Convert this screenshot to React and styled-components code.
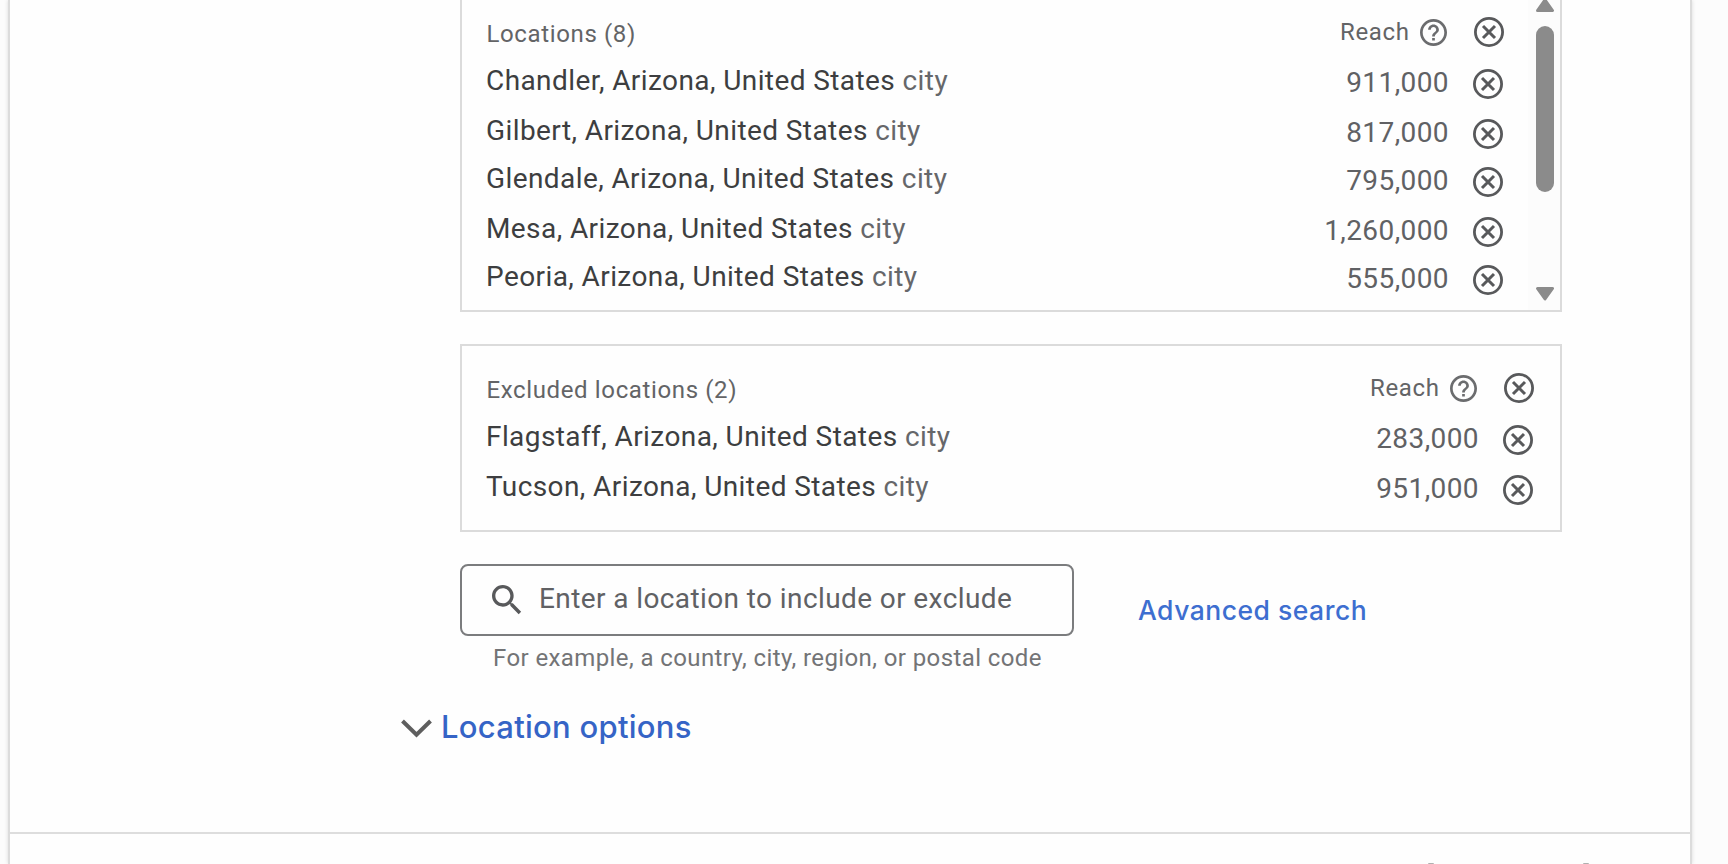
import React from 'react';
import styled, { createGlobalStyle, css } from 'styled-components';

const GlobalStyle = createGlobalStyle`
    * {
        box-sizing: border-box;
    }
    body {
        margin: 0;
        background: #fcfcfc;
        font-family: Roboto, sans-serif;
        overflow: hidden;
    }
    svg {
        display: block;
        flex: none;
    }
`;

const Page = styled.main`
    height: 864px;
    padding: 0 36px 0 8px;
    overflow: hidden;
`;

const Card = styled.div`
    height: 864px;
    display: flex;
    flex-direction: column;
    background: #fefefe;
    border: solid #dcdcdc;
    border-width: 0 2px;
    box-shadow: 0 0 4px rgba(0, 0, 0, 0.14);
`;

const Settings = styled.section`
    height: 834px;
    padding-left: 391px;
    border-bottom: 2px solid #dddddd;
`;

const Targeting = styled.div`
    width: 1161px;
    padding-left: 59px;
`;

const boxBorder = css`
    border: 2px solid #dbdbdb;
`;

const LocationBox = styled.div`
    display: flex;
    width: 1102px;
    ${boxBorder}
    ${(props) =>
        props.$scrolled
            ? css`
                  height: 312px;
                  border-top: 0;
              `
            : css`
                  height: 188px;
                  margin-top: 32px;
                  padding-top: 10px;
              `}
`;

const BoxContent = styled.div`
    flex: 1;
`;

const BoxHeader = styled.header`
    display: flex;
    align-items: center;
    height: 60px;
    padding: 4px 26px 0 24.5px;
    color: #636466;
    font-size: 24px;
    letter-spacing: 0.63px;
    h2 {
        flex: 1;
        margin: 0;
        padding-top: 4px;
        font-size: 24px;
        font-weight: 400;
    }
    .help {
        margin: 0 27px 0 10.5px;
    }
`;

const LocationRow = styled.li`
    display: flex;
    height: 48px;
    padding: 0 27px 0 24px;
    font-size: 28px;
    letter-spacing: 0.41px;
    color: #606164;
    &:nth-child(even) {
        margin-top: 2px;
    }
    svg {
        margin-top: 9px;
    }
`;

const LocationList = styled.ul`
    margin: 0;
    padding: 0;
    list-style: none;
`;

const LocationName = styled.span`
    flex: 1;
    line-height: 42px;
    color: #3d3e40;
    em {
        font-style: normal;
        color: #66676a;
    }
`;

const ReachValue = styled.span`
    margin-right: 24px;
    line-height: 46px;
`;

const ScrollBar = styled.div`
    display: flex;
    flex-direction: column;
    align-items: center;
    width: 32px;
    margin-left: -2px;
    padding: 0 0 9px 2px;
    background: #fcfcfc;
`;

const ScrollThumb = styled.div`
    width: 18px;
    height: 166px;
    margin: 14px 0 auto;
    border-radius: 9px;
    background: #8b8b8b;
`;

const SearchRow = styled.div`
    display: flex;
    align-items: flex-start;
    margin-top: 32px;
`;

const SearchField = styled.div`
    display: flex;
    align-items: center;
    gap: 12px;
    width: 614px;
    height: 72px;
    padding-left: 25px;
    border: 2px solid #7b7c7e;
    border-radius: 8px;
    color: #606164;
    font-size: 28px;
    letter-spacing: 0.4px;
    span {
        padding-bottom: 4px;
    }
`;

const SearchHint = styled.p`
    margin: 10px 0 0 33px;
    color: #737476;
    font-size: 24px;
    line-height: 24px;
    letter-spacing: 0.4px;
`;

const AdvancedSearch = styled.a`
    margin: 26px 0 0 64px;
    color: #3d6ed0;
    font: 500 26.5px/40px Inter, sans-serif;
    letter-spacing: 0.5px;
`;

const LocationOptions = styled.div`
    display: flex;
    align-items: center;
    gap: 9px;
    height: 40px;
    margin-top: 37px;
    color: #3564c6;
    font: 500 31px/40px Inter, sans-serif;
    letter-spacing: 0.27px;
    svg {
        margin-top: 3px;
    }
`;

// Only the tips of the next panel's marks are visible at the fold
const NextPanel = styled.section`
    display: flex;
    flex: 1;
    align-items: flex-end;
    justify-content: flex-end;
    gap: 149px;
    padding-right: 101px;
    i {
        width: 6px;
        height: 1px;
        border-radius: 3px 3px 0 0;
        background: #b0b0b0;
    }
`;

const RemoveIcon = () => (
    <svg width="30" height="30" viewBox="0 0 30 30" fill="none" stroke="#58595b">
        <circle cx="15" cy="15" r="13.6" strokeWidth="2.8" />
        <path d="M9 9L21 21M21 9L9 21" strokeWidth="3" />
    </svg>
);

const HelpIcon = () => (
    <svg className="help" width="27" height="27" viewBox="2 2 20 20" fill="#6b6c6e">
        <path d="M11 18h2v-2h-2v2zm1-16C6.48 2 2 6.48 2 12s4.48 10 10 10 10-4.48 10-10S17.52 2 12 2zm0 18c-4.41 0-8-3.59-8-8s3.59-8 8-8 8 3.59 8 8-3.59 8-8 8zm0-14c-2.21 0-4 1.79-4 4h2c0-1.1.9-2 2-2s2 .9 2 2c0 2-3 1.75-3 5h2c0-2.25 3-2.5 3-5 0-2.21-1.79-4-4-4z" />
    </svg>
);

const SearchIcon = () => (
    <svg width="40" height="40" viewBox="0 0 24 24" fill="#58595b">
        <path d="M15.5 14h-.79l-.28-.27C15.41 12.59 16 11.11 16 9.5 16 5.91 13.09 3 9.5 3S3 5.91 3 9.5 5.91 16 9.5 16c1.61 0 3.09-.59 4.23-1.57l.27.28v.79l5 4.99L20.49 19l-4.99-5zm-6 0C7.01 14 5 11.99 5 9.5S7.01 5 9.5 5 14 7.01 14 9.5 11.99 14 9.5 14z" />
    </svg>
);

const ChevronIcon = () => (
    <svg width="31" height="19" viewBox="0 0 31 19" fill="none" stroke="#5e5e5e" strokeWidth="4">
        <path d="M1.5 2L15.5 15.6L29.5 2" />
    </svg>
);

const included = [
    { name: 'Chandler', reach: 911000 },
    { name: 'Gilbert', reach: 817000 },
    { name: 'Glendale', reach: 795000 },
    { name: 'Mesa', reach: 1260000 },
    { name: 'Peoria', reach: 555000 },
];

const excluded = [
    { name: 'Flagstaff', reach: 283000 },
    { name: 'Tucson', reach: 951000 },
];

const Locations = ({ title, locations }) => (
    <BoxContent>
        <BoxHeader>
            <h2>{title}</h2>
            <span>Reach</span>
            <HelpIcon />
            <RemoveIcon />
        </BoxHeader>
        <LocationList>
            {locations.map(({ name, reach }) => (
                <LocationRow key={name}>
                    <LocationName>
                        {name}, Arizona, United States <em>city</em>
                    </LocationName>
                    <ReachValue>{reach.toLocaleString('en')}</ReachValue>
                    <RemoveIcon />
                </LocationRow>
            ))}
        </LocationList>
    </BoxContent>
);

const App = () => {
    return (
        <Page>
            <GlobalStyle />
            <Card>
                <Settings>
                    <Targeting>
                        <LocationBox $scrolled>
                            <Locations title="Locations (8)" locations={included} />
                            <ScrollBar>
                                <svg width="18" height="12" viewBox="0 0 18 12">
                                    <path d="M9 0L16.5 10.5H1.5z" fill="#8b8b8b" stroke="#8b8b8b" strokeWidth="3" strokeLinejoin="round" />
                                </svg>
                                <ScrollThumb />
                                <svg width="18" height="14" viewBox="0 0 18 14">
                                    <path d="M9 12L16.5 1.5H1.5z" fill="#8b8b8b" stroke="#8b8b8b" strokeWidth="3" strokeLinejoin="round" />
                                </svg>
                            </ScrollBar>
                        </LocationBox>
                        <LocationBox>
                            <Locations title="Excluded locations (2)" locations={excluded} />
                        </LocationBox>
                        <SearchRow>
                            <div>
                                <SearchField>
                                    <SearchIcon />
                                    <span>Enter a location to include or exclude</span>
                                </SearchField>
                                <SearchHint>For example, a country, city, region, or postal code</SearchHint>
                            </div>
                            <AdvancedSearch>Advanced search</AdvancedSearch>
                        </SearchRow>
                    </Targeting>
                    <LocationOptions>
                        <ChevronIcon />
                        Location options
                    </LocationOptions>
                </Settings>
                <NextPanel>
                    <i />
                    <i />
                </NextPanel>
            </Card>
        </Page>
    );
};

export default App;
